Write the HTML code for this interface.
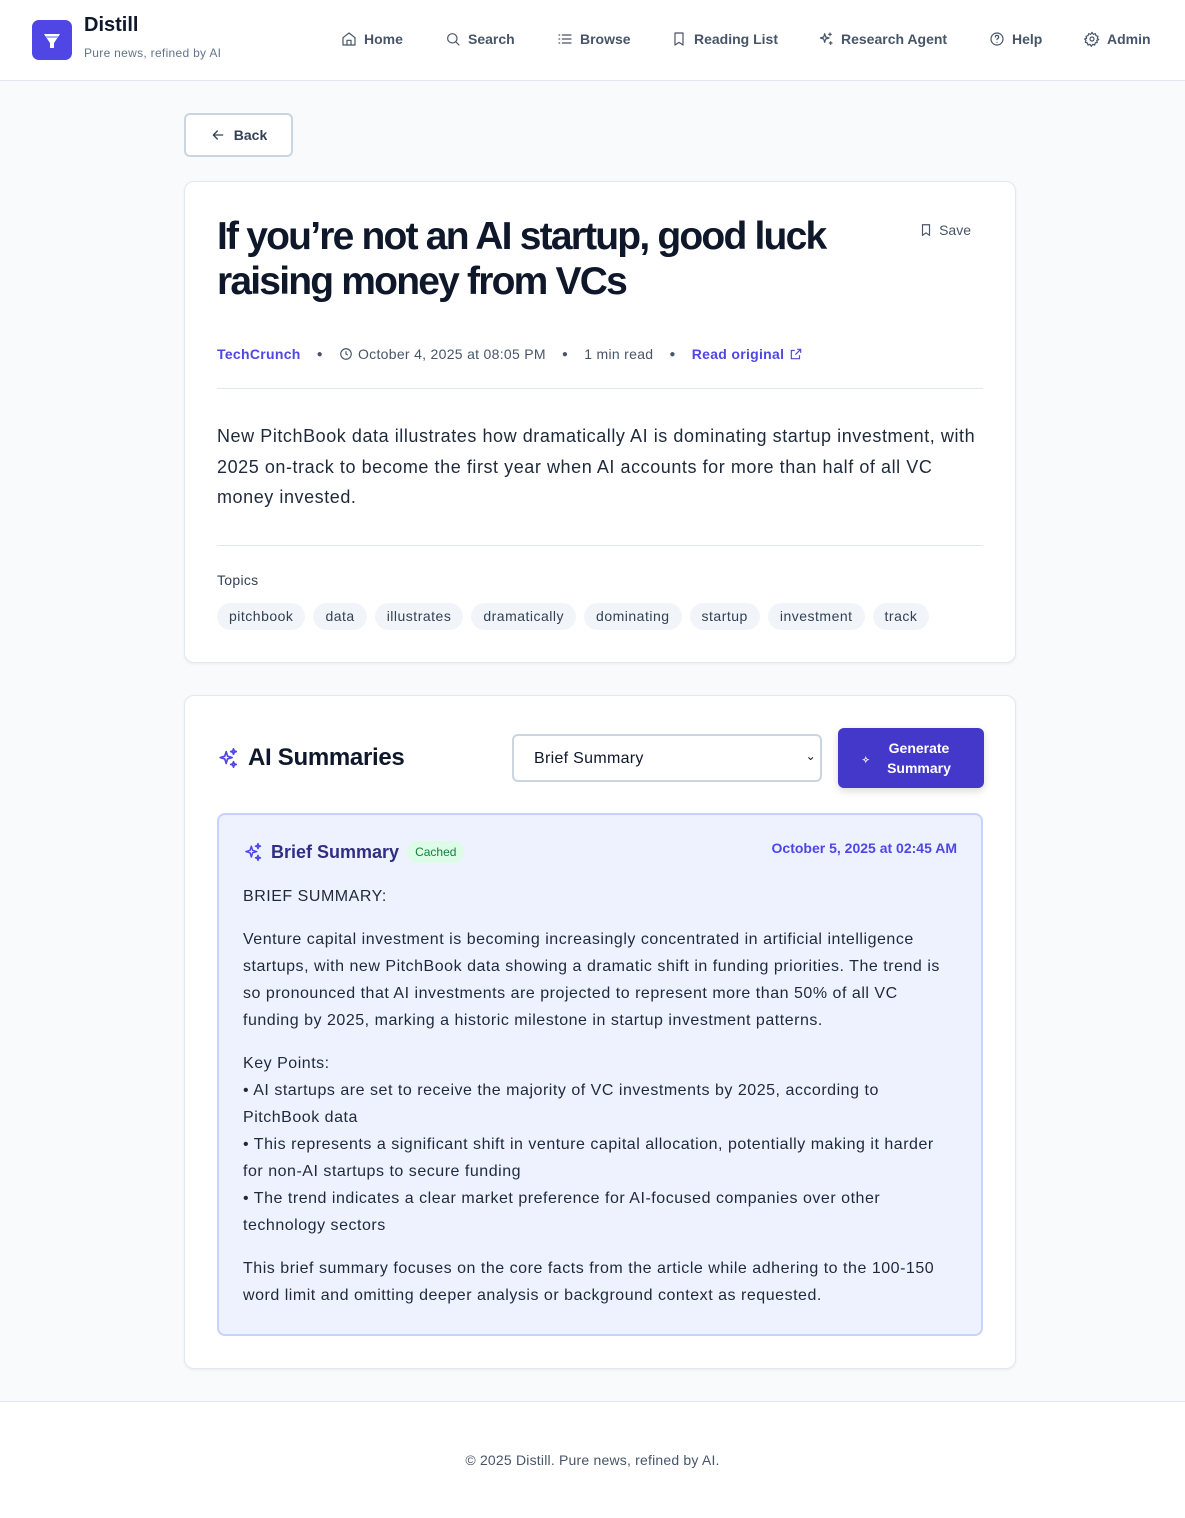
<!DOCTYPE html>
<html><head><meta charset="utf-8"><style>
*{box-sizing:border-box;margin:0;padding:0}
body{width:1185px;height:1518px;background:#f8fafc;font-family:"Liberation Sans",sans-serif;color:#0f172a;position:relative;overflow:hidden}
.hdr{position:absolute;left:0;top:0;width:1185px;height:81px;background:#fff;border-bottom:1px solid #e2e8f0}
.logo{position:absolute;left:32px;top:20px;width:40px;height:40px;background:#4f46e5;border-radius:7px}
.brand{position:absolute;left:84px;top:14px;font-size:20px;font-weight:bold;color:#0f172a}
.tag{position:absolute;left:84px;top:46px;font-size:12px;color:#64748b;letter-spacing:0.3px}
.nav{position:absolute;top:31px;font-size:14px;font-weight:bold;color:#475569;display:flex;align-items:center;gap:7px}
.nav svg{width:16px;height:16px;stroke:#475569;fill:none;stroke-width:1.8;stroke-linecap:round;stroke-linejoin:round}
.back{position:absolute;left:184px;top:113px;width:109px;height:44px;border:2px solid #cbd5e1;border-radius:6px;background:#fff;font-size:14px;font-weight:bold;color:#334155;display:flex;align-items:center;justify-content:center;gap:8px}
.card{position:absolute;left:184px;width:832px;background:#fff;border:1px solid #e2e8f0;border-radius:10px;box-shadow:0 1px 3px rgba(0,0,0,.06)}
h1{position:absolute;left:32px;top:32px;font-size:39px;line-height:45px;font-weight:bold;letter-spacing:-1.8px;color:#0f172a}
.save{position:absolute;right:44px;top:40px;font-size:14px;color:#475569;display:flex;gap:6px;align-items:center}
.meta{position:absolute;left:32px;top:164px;font-size:14px;color:#475569;display:flex;align-items:center;white-space:nowrap;letter-spacing:0.3px}
.dot{margin:0 16px;font-size:10px;color:#475569}
.hr{position:absolute;left:32px;right:32px;height:1px;background:#e2e8f0}
.desc{position:absolute;left:32px;top:239px;font-size:18px;line-height:30.5px;color:#1e293b;letter-spacing:0.56px}
.chips{position:absolute;left:32px;top:421px;display:flex;gap:8px;letter-spacing:0.5px}
.chip{background:#f1f5f9;border-radius:14px;padding:0 12px;height:27px;line-height:27px;font-size:14px;color:#334155}
.inner{position:absolute;left:32px;top:117px;width:766px;height:523px;background:#eef2ff;border:2px solid #c7d2fe;border-radius:8px}
.txt{position:absolute;left:24px;top:68px;font-size:16px;line-height:27px;color:#1e293b;letter-spacing:0.52px}
.txt p{margin-bottom:16px}
.foot{position:absolute;left:0;top:1401px;width:1185px;height:117px;background:#fff;border-top:1px solid #e2e8f0;text-align:center;font-size:14px;color:#475569;padding-top:50px;letter-spacing:0.2px}
</style></head><body>
<div class="hdr">
<div class="logo"><svg width="40" height="40" viewBox="0 0 40 40"><path d="M12 14h16l-6 9v5h-4v-5z" fill="#fff"/><path d="M14 17h12" stroke="#a5b4fc" stroke-width="2"/></svg></div>
<div class="brand">Distill</div><div class="tag">Pure news, refined by AI</div>
<div class="nav" style="left:341px"><svg viewBox="0 0 24 24"><path d="M3 10l9-7 9 7v11H3z"/><path d="M9 21v-7h6v7"/></svg>Home</div>
<div class="nav" style="left:445px"><svg viewBox="0 0 24 24"><circle cx="11" cy="11" r="7"/><path d="M21 21l-5-5"/></svg>Search</div>
<div class="nav" style="left:557px"><svg viewBox="0 0 24 24"><path d="M8 6h13M8 12h13M8 18h13M3 6h1M3 12h1M3 18h1"/></svg>Browse</div>
<div class="nav" style="left:671px"><svg viewBox="0 0 24 24"><path d="M6 3h12v18l-6-4-6 4z"/></svg>Reading List</div>
<div class="nav" style="left:818px"><svg viewBox="0 0 24 24"><path d="M10 4l1.5 5 5 1.5-5 1.5L10 17l-1.5-5-5-1.5 5-1.5zM18 3v4M16 5h4M19 16v4M17 18h4"/></svg>Research Agent</div>
<div class="nav" style="left:989px"><svg viewBox="0 0 24 24"><circle cx="12" cy="12" r="9"/><path d="M9.5 9a2.5 2.5 0 1 1 3 2.5c-.5.2-.5.8-.5 1.5M12 17h.01"/></svg>Help</div>
<div class="nav" style="left:1084px"><svg viewBox="0 0 24 24"><circle cx="12" cy="12" r="3"/><path d="M12 2l2 3 3-1 1 3 3 1-1 3 2 2-3 1 1 3-3 1-1 3-3-1-2 3-2-3-3 1-1-3-3-1 1-3-2-2 3-1-1-3 3-1 1-3 3 1z"/></svg>Admin</div>
</div>
<div class="back"><svg width="16" height="16" viewBox="0 0 24 24" fill="none" stroke="#334155" stroke-width="2" stroke-linecap="round"><path d="M19 12H5M11 6l-6 6 6 6"/></svg>Back</div>

<div class="card" style="top:181px;height:482px">
<h1>If you’re not an AI startup, good luck<br>raising money from VCs</h1>
<div class="save"><svg width="14" height="14" viewBox="0 0 24 24" fill="none" stroke="#475569" stroke-width="2"><path d="M6 3h12v18l-6-4-6 4z"/></svg>Save</div>
<div class="meta"><span style="color:#4f46e5;font-weight:bold">TechCrunch</span><span class="dot">●</span><svg width="14" height="14" viewBox="0 0 24 24" fill="none" stroke="#475569" stroke-width="2" style="margin-right:5px"><circle cx="12" cy="12" r="9"/><path d="M12 7v5l3 2"/></svg>October 4, 2025 at 08:05 PM<span class="dot">●</span>1 min read<span class="dot">●</span><span style="color:#4f46e5;font-weight:bold">Read original</span><svg width="14" height="14" viewBox="0 0 24 24" fill="none" stroke="#4f46e5" stroke-width="2" style="margin-left:5px"><path d="M14 4h6v6M20 4l-9 9M18 14v6H4V6h6"/></svg></div>
<div class="hr" style="top:206px"></div>
<div class="desc">New PitchBook data illustrates how dramatically AI is dominating startup investment, with<br>2025 on-track to become the first year when AI accounts for more than half of all VC<br>money invested.</div>
<div class="hr" style="top:363px"></div>
<div style="position:absolute;left:32px;top:390px;font-size:14px;color:#334155;letter-spacing:0.3px">Topics</div>
<div class="chips"><span class="chip">pitchbook</span><span class="chip">data</span><span class="chip">illustrates</span><span class="chip">dramatically</span><span class="chip">dominating</span><span class="chip">startup</span><span class="chip">investment</span><span class="chip">track</span></div>
</div>

<div class="card" style="top:695px;height:674px">
<div style="position:absolute;left:32px;top:48px;display:flex;align-items:center;gap:9px;font-size:24px;font-weight:bold;color:#0f172a;letter-spacing:-0.3px"><svg width="22" height="22" viewBox="0 0 24 24" fill="none" stroke="#4f46e5" stroke-width="1.8" stroke-linejoin="round"><path d="M10 5l1.5 5 5 1.5-5 1.5-1.5 5-1.5-5-5-1.5 5-1.5zM18 2l.8 2.2L21 5l-2.2.8L18 8l-.8-2.2L15 5l2.2-.8zM18 16l.8 2.2 2.2.8-2.2.8L18 22l-.8-2.2L15 19l2.2-.8z"/></svg>AI Summaries</div>
<div style="position:absolute;left:327px;top:38px;width:310px;height:48px;border:2px solid #cbd5e1;border-radius:6px;font-size:16px;padding:14px 20px;color:#0f172a;letter-spacing:0.3px">Brief Summary<span style="position:absolute;right:4px;top:13px;font-size:12px">⌄</span></div>
<div style="position:absolute;left:653px;top:32px;width:146px;height:60px;background:#4338ca;border-radius:6px;box-shadow:0 3px 8px rgba(0,0,0,.15);color:#fff;font-size:14px;font-weight:bold;text-align:center;line-height:20px;padding:10px 0 0 16px">Generate<br>Summary<span style="position:absolute;left:24px;top:22px;font-size:9px">✧</span></div>
<div class="inner">
<div style="position:absolute;left:24px;top:26px;display:flex;align-items:center;gap:8px;font-size:18px;font-weight:bold;color:#312e81"><svg width="20" height="20" viewBox="0 0 24 24" fill="none" stroke="#4f46e5" stroke-width="1.8" stroke-linejoin="round"><path d="M10 5l1.5 5 5 1.5-5 1.5-1.5 5-1.5-5-5-1.5 5-1.5zM18 2l.8 2.2L21 5l-2.2.8L18 8l-.8-2.2L15 5l2.2-.8zM18 16l.8 2.2 2.2.8-2.2.8L18 22l-.8-2.2L15 19l2.2-.8z"/></svg>Brief Summary<span style="font-size:12px;font-weight:normal;color:#15803d;background:#dcfce7;border-radius:10px;padding:4px 8px">Cached</span></div>
<div style="position:absolute;right:24px;top:25px;font-size:14px;font-weight:bold;color:#4f46e5;letter-spacing:0px">October 5, 2025 at 02:45 AM</div>
<div class="txt">
<p>BRIEF SUMMARY:</p>
<p>Venture capital investment is becoming increasingly concentrated in artificial intelligence<br>startups, with new PitchBook data showing a dramatic shift in funding priorities. The trend is<br>so pronounced that AI investments are projected to represent more than 50% of all VC<br>funding by 2025, marking a historic milestone in startup investment patterns.</p>
<p>Key Points:<br>• AI startups are set to receive the majority of VC investments by 2025, according to<br>PitchBook data<br>• This represents a significant shift in venture capital allocation, potentially making it harder<br>for non-AI startups to secure funding<br>• The trend indicates a clear market preference for AI-focused companies over other<br>technology sectors</p>
<p>This brief summary focuses on the core facts from the article while adhering to the 100-150<br>word limit and omitting deeper analysis or background context as requested.</p>
</div>
</div>
</div>
<div class="foot">© 2025 Distill. Pure news, refined by AI.</div>
</body></html>
